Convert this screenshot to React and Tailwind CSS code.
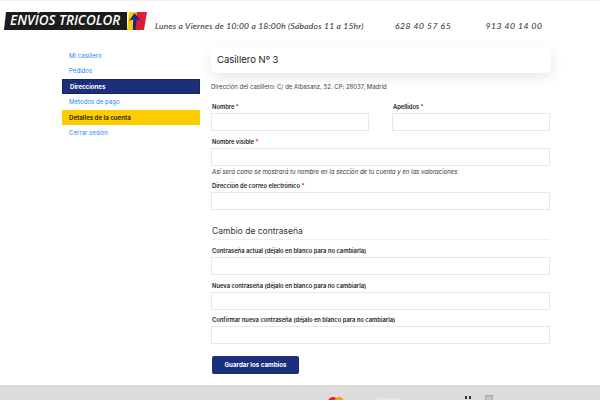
const NAV_ITEMS = [
  { label: 'Mi casillero' },
  { label: 'Pedidos' },
  { label: 'Direcciones', className: 'bg-[#1b2f7a] text-white font-bold border border-[#14236a]' },
  { label: 'Métodos de pago' },
  { label: 'Detalles de la cuenta', className: 'bg-[#ffcc00] text-[#3a3000] font-bold' },
  { label: 'Cerrar sesión' },
]

function Logo() {
  return (
    <div className="flex h-[18px] w-[143px] [font-family:'Open_Sans',sans-serif]">
      <div className="flex w-[123px] items-center bg-[#1c1c1c] pl-[6px] [clip-path:polygon(2px_0,100%_0,100%_100%,0_100%)]">
        <span className="text-[13.5px] font-semibold italic leading-none whitespace-nowrap text-white">ENVÍOS TRICOLOR</span>
      </div>
      <svg width="20" height="18" viewBox="0 0 20 18" className="shrink-0">
        <polygon points="2,0 10,0 7,18 0,18" fill="#f7cf0a" />
        <polygon points="10,0 20,0 17,18 7,18" fill="#e21b35" />
        <path d="M7.5 1 L13.5 8.5 L9.6 7.6 L8.6 18 L5.8 18 L6.2 7.6 L2 8.8 Z" fill="#1a2a8a" />
      </svg>
    </div>
  )
}

function Field({ label, required, className = '' }) {
  return (
    <div className={className}>
      <label className="block h-[10px] pl-px text-[5.8px] leading-[10px] font-semibold text-[#222]">
        {label}
        {required && <span className="text-red-600"> *</span>}
      </label>
      <div className="mt-px h-[18px] border border-[#e8e8e8] bg-white" />
    </div>
  )
}

export default function App() {
  return (
    <div className="h-[400px] w-[600px] overflow-hidden bg-white [font-family:'Inter',sans-serif]">
      <header className="flex h-[40px] border-t border-[#eeeeee] pl-[4px] pt-[11px]">
        <Logo />
        <div className="flex h-[28px] items-center text-[8.5px] italic text-[#2b2b2b] [font-family:'Lato',sans-serif]">
          <span className="ml-[8px] w-[240px] whitespace-nowrap tracking-[0.22px]">Lunes a Viernes de 10:00 a 18:00h (Sábados 11 a 15hr)</span>
          <span className="w-[90.5px] whitespace-nowrap tracking-[0.55px]">628 40 57 65</span>
          <span className="whitespace-nowrap tracking-[0.55px]">913 40 14 00</span>
        </div>
      </header>

      <div className="flex h-[344.5px] pl-[62px]">
        <nav className="mt-[7.5px] w-[138px] shrink-0">
          {NAV_ITEMS.map((item) => (
            <div
              key={item.label}
              className={`flex h-[15.5px] items-center pl-[7px] text-[6.1px] ${item.className || 'text-[#1e88f0]'}`}
            >
              {item.label}
            </div>
          ))}
        </nav>

        <main className="ml-[11px] w-[340px] pt-[7px]">
          <div className="flex h-[26px] items-center rounded-[5px] bg-white pl-[6px] text-[9.5px] text-[#222] shadow-[0_4px_14px_rgba(0,0,0,0.1)]">
            Casillero Nº 3
          </div>
          <p className="mt-[9px] text-[6px] leading-[9px] text-[#444]">
            Dirección del casillero: C/ de Albasanz, 52. CP: 28037, Madrid
          </p>

          <div className="mt-[11px] w-[339px]">
            <div className="flex gap-[23px]">
              <Field label="Nombre" required className="w-[158px]" />
              <Field label="Apellidos" required className="w-[158px]" />
            </div>
            <Field label="Nombre visible" required className="mt-[6px]" />
            <p className="mt-px pl-px text-[6px] leading-[9px] italic text-[#333]">
              Así será como se mostrará tu nombre en la sección de tu cuenta y en las valoraciones
            </p>
            <Field label="Dirección de correo electrónico" required className="mt-[5px]" />

            <h2 className="mt-[14px] h-[15px] pl-px text-[8.5px] leading-[14px] text-[#333]">Cambio de contraseña</h2>
            <div className="h-px bg-[#eeeeee]" />

            <Field label="Contraseña actual (déjalo en blanco para no cambiarla)" className="mt-[6px]" />
            <Field label="Nueva contraseña (déjalo en blanco para no cambiarla)" className="mt-[6px]" />
            <Field label="Confirmar nueva contraseña (déjalo en blanco para no cambiarla)" className="mt-[5px]" />
          </div>

          <button className="mt-[12px] ml-[1px] h-[18px] w-[87px] rounded-[2px] bg-[#1b2f7a] text-[6.2px] font-bold text-white">
            Guardar los cambios
          </button>
        </main>
      </div>

      <footer className="flex h-[15.5px] bg-[#dcdcda] pl-[328px] pt-[12px]">
        <div className="flex">
          <span className="h-[10px] w-[10px] rounded-full bg-[#e8202a]" />
          <span className="ml-[-4px] h-[10px] w-[10px] rounded-full bg-[#f59e1b]" />
        </div>
        <span className="ml-[33px] mt-[1px] h-[3px] w-[23px] bg-[#e6e6e4]" />
        <span className="ml-[65px] mt-[-0.5px] h-[3px] w-[2px] bg-[#333]" />
        <span className="ml-[2px] mt-[-0.5px] h-[3px] w-[2px] bg-[#333]" />
        <span className="ml-[14px] mt-[-1.5px] h-[6px] w-[8px] border border-[#aaa] bg-[#c4c4c4]" />
      </footer>
    </div>
  )
}
